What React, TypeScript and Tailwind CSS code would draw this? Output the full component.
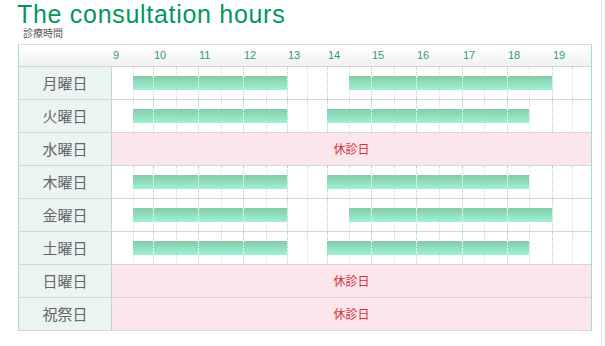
import React from "react";

type Day = { label: string; bars?: [number, number][] };

const days: Day[] = [
  { label: "月曜日", bars: [[1, 7], [11, 19]] },
  { label: "火曜日", bars: [[1, 7], [10, 18]] },
  { label: "水曜日" },
  { label: "木曜日", bars: [[1, 7], [10, 18]] },
  { label: "金曜日", bars: [[1, 7], [11, 19]] },
  { label: "土曜日", bars: [[1, 7], [10, 18]] },
  { label: "日曜日" },
  { label: "祝祭日" },
];

const CELLS = 22;
const hours = [9, 10, 11, 12, 13, 14, 15, 16, 17, 18, 19];

const gridCls =
  "grid h-[32px] w-[479px] grid-cols-[21px_20px_23px_22px_23px_22px_23px_21px_20px_20px_22px_22px_23px_22px_23px_23px_22px_23px_22px_23px_20px_19px]";

function Timeline({ bars }: { bars: [number, number][] }) {
  const pieces: { i: number; first: boolean }[] = [];
  bars.forEach(([s, e]) => {
    for (let i = s; i <= e; i++) pieces.push({ i, first: i === s });
  });
  return (
    <div className={gridCls}>
      {Array.from({ length: CELLS }).map((_, i) => (
        <div
          key={"c" + i}
          style={{ gridColumn: i + 1, gridRow: 1 }}
          className={
            i === 0
              ? ""
              : i % 2 === 0
              ? "border-l border-dotted border-[#9ed8c1]"
              : "border-l border-dotted border-[#d9d9d9]"
          }
        />
      ))}
      {pieces.map(({ i, first }) => (
        <div
          key={"b" + i}
          style={{ gridColumn: i + 1, gridRow: 1 }}
          className={
            !first && i % 2 === 0
              ? "z-10 self-center h-[14px] bg-linear-to-b from-[#86cba8] to-[#9df2d4] border-l border-dotted border-white"
              : "z-10 self-center h-[14px] bg-linear-to-b from-[#86cba8] to-[#9df2d4]"
          }
        />
      ))}
    </div>
  );
}

export default function App() {
  return (
    <div className="flex h-[346px] w-[605px] bg-white">
      <div className="flex w-[601px] flex-col">
        <div className="h-[28px] pl-[17px] font-['Liberation_Sans',Arial,sans-serif] text-[25px] leading-[28px] tracking-[0.7px] text-[#02975e]">
          The consultation hours
        </div>
        <div className="h-[16px] pl-[23px] font-['Liberation_Sans','Noto_Sans_CJK_JP',sans-serif] text-[10px] leading-[11px] text-[#555555]">
          診療時間
        </div>
        <div className="ml-[18px] w-[574px] border-x border-t border-x-[#a8dcc3] border-t-[#dcdcdc]">
          {/* header */}
          <div className="flex h-[22px] border-b border-[#d4d4d4] bg-linear-to-b from-white to-[#f1f1f1]">
            <div className="w-[93px]" />
            <div className="grid h-[21px] w-[479px] grid-cols-[21px_20px_23px_22px_23px_22px_23px_21px_20px_20px_22px_22px_23px_22px_23px_23px_22px_23px_22px_23px_20px_19px]">
              {hours.map((h, k) => (
                <div
                  key={h}
                  style={{ gridColumn: `${k * 2 + 1} / span 2`, gridRow: 1 }}
                  className="self-center pl-[1px] font-['Liberation_Sans',Arial,sans-serif] text-[11px] leading-[13px] text-[#2f9a84]"
                >
                  {h}
                </div>
              ))}
            </div>
          </div>
          {days.map((d) => (
            <div key={d.label} className="flex h-[33px] border-b border-[#d6d6d6]">
              <div className="flex h-[32px] w-[93px] items-center justify-center border-r border-[#b5dfcc] bg-[#eaf4f2] font-['Noto_Sans_CJK_JP',sans-serif] text-[15px] text-[#666666]">
                {d.label}
              </div>
              {d.bars ? (
                <Timeline bars={d.bars} />
              ) : (
                <div className="flex h-[32px] w-[479px] items-center justify-center bg-[#fbe7eb] font-['Noto_Sans_CJK_JP',sans-serif] text-[12px] text-[#d22f3a]">
                  休診日
                </div>
              )}
            </div>
          ))}
        </div>
      </div>
      <div className="h-[346px] w-px bg-[#dce8e6]" />
    </div>
  );
}
